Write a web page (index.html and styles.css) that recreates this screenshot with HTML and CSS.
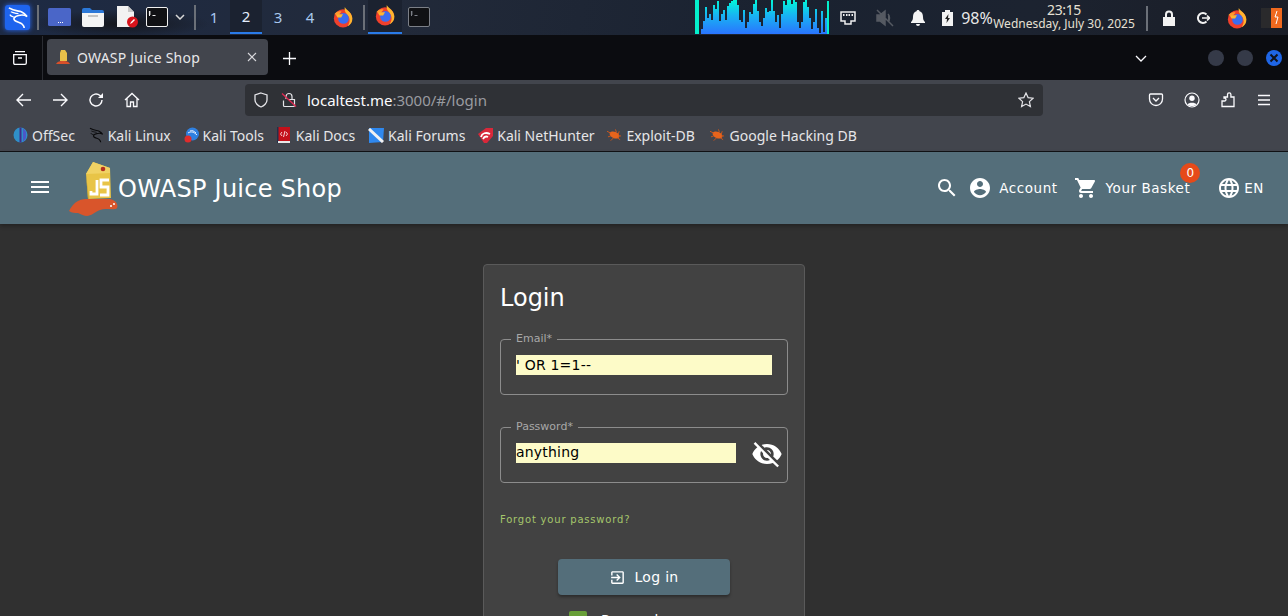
FILE: index.html
```html
<!DOCTYPE html>
<html lang="en">
<head>
  <meta charset="UTF-8">
  <title>OWASP Juice Shop</title>
  <link rel="stylesheet" href="styles.css">
</head>
<body>
  <svg class="defs" width="0" height="0">
    <defs>
      <linearGradient id="specFill" gradientUnits="userSpaceOnUse" x1="0" y1="0" x2="0" y2="34">
        <stop offset="0" stop-color="#00f8d8"/>
        <stop offset="0.45" stop-color="#18b4f2"/>
        <stop offset="1" stop-color="#2a74ff"/>
      </linearGradient>
      <symbol id="firefox" viewBox="0 0 24 24">
        <circle cx="12" cy="13.500" r="10" fill="#f0402c"/>
        <path d="M14 1c1 3 7 5 8 11 1 5-2 9-5 10 3-4 3-9 0-12-1-2-4-4-3-9z" fill="#ffb52e"/>
        <path d="M2.500 9c2-3 5-4 8-3l-3 3.500z" fill="#ff9a2e"/>
        <circle cx="12.500" cy="13.500" r="5.800" fill="#3a6cf0"/>
        <path d="M4 9h8l-2 3.500H6z" fill="#ffb52e"/>
      </symbol>
      <symbol id="terminal" viewBox="0 0 22 20">
        <rect x="0.500" y="0.500" width="21" height="19" rx="1.500" fill="#101114" stroke="currentColor"/>
        <path d="M3.500 4v5M2.800 5h2M2.800 7h2M6.500 8.500h3" stroke="currentColor" fill="none"/>
      </symbol>
      <symbol id="bug" viewBox="0 0 16 12">
        <ellipse cx="8" cy="6" rx="5.500" ry="3.400" transform="rotate(22 8 6)" fill="#e8641c"/>
        <path d="M0 2l4 2M1 8l3-1M4 12l3-3M9 0l1 3M13 2l-1 3M15 7l-3 0M14 11l-3-2" stroke="#d0561a" fill="none"/>
      </symbol>
      <symbol id="dragon" viewBox="0 0 24 24">
        <path d="M3 2c5 3 9 3 13 4 2 1 4 2 6 5-3-2-6-2-9-1-4 1-6 3-4 5 2 2 6 2 8 4 1 1 2 2 2 4" fill="none" stroke="currentColor" stroke-width="1.700"/>
        <path d="M5 6c3 1 5 2 8 2M9 12c-2-1-4-1-5-3" fill="none" stroke="currentColor" stroke-width="1.200"/>
      </symbol>
    </defs>
  </svg>

  <header class="panel">
    <div class="panel-left">
      <span class="kali-btn">
        <svg class="dragon-light" width="23" height="23"><use href="#dragon"/></svg>
      </span>
      <i class="panel-sep"></i>
      <svg width="23" height="18" viewBox="0 0 23 18"><rect width="23" height="18" rx="1.500" fill="#4a66c8"/><path d="M10 14h1v1h-1zM12 14h1v1h-1zM14 14h1v1h-1z" fill="#fff"/></svg>
      <svg width="22" height="19" viewBox="0 0 22 19"><path d="M0 2q0-2 2-2h6l2 2h10q2 0 2 2v2H0z" fill="#2b78d8"/><path d="M0 5h22v12q0 2-2 2H2q-2 0-2-2z" fill="#f4f4f4"/><rect x="6" y="7" width="10" height="2" fill="#c4c4c4"/></svg>
      <svg width="22" height="22" viewBox="0 0 22 22"><path d="M0 0h11l6 6v15H0z" fill="#f2f2f2"/><path d="M11 0l6 6h-6z" fill="#c8c8c8"/><circle cx="15.500" cy="16" r="5.500" fill="#d8141c"/><path d="M13 18l1-2 3-3 1 1-3 3z" fill="#fff"/></svg>
      <svg class="term-live" width="22" height="20"><use href="#terminal"/></svg>
      <svg width="10" height="6" viewBox="0 0 10 6"><path d="M1 1l4 4 4-4" fill="none" stroke="#d8d8d8" stroke-width="1.500"/></svg>
      <i class="panel-sep"></i>
      <span class="ws">1</span>
      <span class="ws ws-on">2</span>
      <span class="ws">3</span>
      <span class="ws">4</span>
      <svg width="22" height="22"><use href="#firefox"/></svg>
      <i class="panel-sep"></i>
      <span class="task task-on"><svg width="22" height="22"><use href="#firefox"/></svg></span>
      <svg class="term-dim" width="22" height="20"><use href="#terminal"/></svg>
    </div>
    <div class="panel-right">
      <svg class="spectrum" width="134" height="36" viewBox="0 0 134 36">
        <rect width="4" height="34" fill="#04f0cc"/>
        <rect x="132" y="1" width="2" height="33" fill="#04f0cc"/>
        <path fill="url(#specFill)" d="M6 34V29H8V21H10V7H12V18H14V14H16V20H18V5H20V9H22V1H24V21H26V14H28V10H30V20H32V6H34V3H36V1H38V0H42V5H44V20H46V22H48V10H50V28H52V22H54V12H56V14H58V4H60V0H62V11H64V22H66V26H68V18H70V8H72V12H74V11H76V0H78V11H80V22H82V15H84V28H86V14H88V1H90V5H92V0H96V4H98V0H100V2H102V22H104V28H106V22H108V2H110V0H112V7H114V18H116V29H118V22H120V9H122V28H124V33H126V11H128V32H130V18H132V34z"/>
      </svg>
      <svg width="16" height="14" viewBox="0 0 16 14"><path d="M1 1h14v9h-4v3H5v-3H1z" fill="none" stroke="#eee" stroke-width="1.500"/><path d="M3 3h1.500v2H3zM6 3h1.500v2H6zM8.500 3H10v2H8.500zM11.500 3H13v2h-1.500z" fill="#eee"/></svg>
      <svg width="20" height="20" viewBox="0 0 20 20"><path d="M3 7h3l5-4v14l-5-4H3zM14 6c2 2 2 6 0 8M3 2l16 16" fill="#555a62" stroke="#555a62" stroke-width="1.500"/></svg>
      <svg width="14" height="16" viewBox="0 0 14 16"><path d="M7 0c1 0 1.500 .6 1.500 1.300C11 2 12 4 12 7c0 3 1 4 2 5v1H0v-1c1-1 2-2 2-5 0-3 1-5 3.500-5.700C5.500 .6 6 0 7 0zM5 14h4a2 2 0 0 1-4 0z" fill="#f4f4f4"/></svg>
      <svg width="11" height="16" viewBox="0 0 11 16"><path d="M3 2V0h5v2h3v14H0V2z" fill="#f2f2f2"/><path d="M6.500 4L3 9h2l-.5 4L8 8H6z" fill="#222"/></svg>
      <span class="pct">98%</span>
      <div class="clock">
        <div class="clock-time">23:15</div>
        <div class="clock-date">Wednesday, July 30, 2025</div>
      </div>
      <i class="panel-sep"></i>
      <svg width="14" height="16" viewBox="0 0 14 16"><path d="M3 7V4.500a4 4 0 0 1 8 0V7h2v9H1V7zm2 0h4V4.500a2 2 0 0 0-4 0z" fill="#f2f2f2"/></svg>
      <svg width="14" height="14" viewBox="0 0 14 14"><path d="M10.500 3.500a5 5 0 1 0 0 7" fill="none" stroke="#f2f2f2" stroke-width="2"/><path d="M6 7h8M11 4.500L13.500 7 11 9.500" fill="none" stroke="#f2f2f2" stroke-width="1.600"/></svg>
      <svg width="22" height="22"><use href="#firefox"/></svg>
      <svg class="burp" width="22" height="20" viewBox="0 0 22 20"><rect width="11" height="20" fill="#2a2a2c"/><rect x="10" width="11" height="20" fill="#f0691e"/><path d="M16 3l-2 6h3l-2 7" fill="none" stroke="#fff"/></svg>
    </div>
  </header>

  <div class="tabbar">
    <svg class="tab-list" width="16" height="14" viewBox="0 0 16 14"><path d="M3 .7h10M1.700 3.700h12.600v8.300q0 1.300-1.300 1.300H3q-1.300 0-1.300-1.300V3.700zM6 7h4" fill="none" stroke="#fbfbfe" stroke-width="1.300"/></svg>
    <i class="tabbar-sep"></i>
    <div class="tab">
      <svg width="14" height="16" viewBox="0 0 14 16"><path d="M5 1h4l2 3v8H4V4z" fill="#e8c04a"/><path d="M0 15c2-3 4-3 7-3s5 0 7 3z" fill="#d8502a"/></svg>
      <span class="tab-title">OWASP Juice Shop</span>
      <svg width="10" height="10" viewBox="0 0 10 10"><path d="M1 1l8 8M9 1l-8 8" stroke="#d8d8dc" stroke-width="1.100"/></svg>
    </div>
    <svg class="new-tab" width="13" height="13" viewBox="0 0 13 13"><path d="M6.500 0v13M0 6.500h13" stroke="#fbfbfe" stroke-width="1.300"/></svg>
    <svg class="tab-more" width="12" height="7" viewBox="0 0 12 7"><path d="M1 1l5 5 5-5" fill="none" stroke="#fbfbfe" stroke-width="1.300"/></svg>
    <div class="wm-btns">
      <i class="wm-btn"></i>
      <i class="wm-btn"></i>
      <i class="wm-btn wm-close"><svg width="10" height="10" viewBox="0 0 10 10"><path d="M1.500 1.500l7 7M8.500 1.500l-7 7" stroke="#10131c" stroke-width="2"/></svg></i>
    </div>
  </div>

  <nav class="navbar">
    <div class="nav-icons">
      <svg width="16" height="14" viewBox="0 0 16 14"><path d="M15 7H1.500M7 1L1 7l6 6" fill="none" stroke="#fbfbfe" stroke-width="1.400"/></svg>
      <svg width="16" height="14" viewBox="0 0 16 14"><path d="M1 7h13.500M9 1l6 6-6 6" fill="none" stroke="#fbfbfe" stroke-width="1.400"/></svg>
      <svg width="16" height="16" viewBox="0 0 16 16"><path d="M14 8a6 6 0 1 1-2-4.500L14 5" fill="none" stroke="#fbfbfe" stroke-width="1.400"/><path d="M15 1v5h-5z" fill="#fbfbfe"/></svg>
      <svg width="16" height="16" viewBox="0 0 16 16"><path d="M1 8l7-6.500L15 8M3 6.500V14.500h3.500V10h3v4.500H13V6.500" fill="none" stroke="#fbfbfe" stroke-width="1.300"/></svg>
    </div>
    <div class="urlbar">
      <svg width="16" height="16" viewBox="0 0 16 16"><path d="M8 1l6 2v5c0 3-3 6-6 7-3-1-6-4-6-7V3z" fill="none" stroke="#e4e4e8" stroke-width="1.300"/></svg>
      <svg class="url-lock" width="16" height="16" viewBox="0 0 16 16"><path d="M2.500 8.500V13.500q0 1 1 1h9q1 0 1-1V7.500H7M5 7V4.500a3 3 0 0 1 6 0V7" fill="none" stroke="#e4e4e8" stroke-width="1.200"/><path d="M1 1.500l14 13" stroke="#e22850" stroke-width="1.300"/></svg>
      <span class="url-text">localtest.me<span class="url-rest">:3000/#/login</span></span>
      <svg class="url-star" width="16" height="16" viewBox="0 0 16 16"><path d="M8 1l2.100 4.600 5 .6-3.700 3.400 1 5L8 12.100 3.600 14.600l1-5L.9 6.200l5-.6z" fill="none" stroke="#e4e4e8" stroke-width="1.200"/></svg>
    </div>
    <div class="nav-tools">
      <svg width="16" height="16" viewBox="0 0 16 16"><path d="M2.500 2h11q1 0 1 1v4a6.500 6.500 0 0 1-13 0V3q0-1 1-1zM5 6l3 3 3-3" fill="none" stroke="#fbfbfe" stroke-width="1.300"/></svg>
      <svg width="16" height="16" viewBox="0 0 16 16"><circle cx="8" cy="8" r="7" fill="none" stroke="#fbfbfe" stroke-width="1.200"/><circle cx="8" cy="6.300" r="2.700" fill="#fbfbfe"/><path d="M3.500 12.500c1-2.500 8-2.500 9 0-2 2-7 2-9 0z" fill="#fbfbfe"/></svg>
      <svg width="16" height="16" viewBox="0 0 16 16"><path d="M2 9h2.500a1.500 1.500 0 0 0 0-3H4V5h3.500V2.500a1.700 1.700 0 0 1 3.400 0V5h3.100v9.500H2z" fill="none" stroke="#fbfbfe" stroke-width="1.300"/></svg>
      <svg width="16" height="12" viewBox="0 0 16 12"><path d="M2 1.500h12M2 6h12M2 10.500h12" stroke="#fbfbfe" stroke-width="1.300"/></svg>
    </div>
  </nav>

  <div class="bookmarks">
    <a class="bm"><svg width="15" height="16" viewBox="0 0 15 16"><ellipse cx="7.500" cy="8" rx="7" ry="7.500" fill="#2f8fc8"/><path d="M6.500 .5h2v15h-2z" fill="#3f2f8a"/><path d="M10 1l3 4v6l-3 4z" fill="#4a58c8"/></svg>OffSec</a>
    <a class="bm"><svg class="dragon-dark" width="16" height="16"><use href="#dragon"/></svg>Kali Linux</a>
    <a class="bm"><svg width="15" height="16" viewBox="0 0 15 16"><circle cx="8.500" cy="7" r="6.500" fill="#2f80e0"/><path d="M4 6c3-2 6-1 9 2M6 4c2-1 4 0 6 2" fill="none" stroke="#e8f0ff"/><circle cx="4" cy="12" r="3.500" fill="#e02c2c"/></svg>Kali Tools</a>
    <a class="bm bm-book"><svg width="13" height="16" viewBox="0 0 13 16"><rect x="1" width="12" height="15" fill="#c4101a"/><rect width="1.500" height="16" fill="#23304a"/><rect x="1" y="14" width="12" height="2" fill="#e8e8e8"/><path d="M5 5L3.500 7 5 9M9 5l1.500 2L9 9M8 4L6.500 10" fill="none" stroke="#fff" stroke-width=".800"/></svg>Kali Docs</a>
    <a class="bm"><svg width="16" height="15" viewBox="0 0 16 15"><path d="M1 0h15l-1 14-14 1z" fill="#2f88ee"/><path d="M1 1l14 13" stroke="#f2f2f2" stroke-width="3"/></svg>Kali Forums</a>
    <a class="bm"><svg width="15" height="15" viewBox="0 0 15 15"><path d="M0 6l8-6h7v8l-6 7H6z" fill="#d8283a"/><path d="M3 9c1-4 5-5 9-3M5 11c1-2 3-3 5-2" fill="none" stroke="#fff" stroke-width="1.800"/></svg>Kali NetHunter</a>
    <a class="bm"><svg width="15" height="12"><use href="#bug"/></svg>Exploit-DB</a>
    <a class="bm bm-last"><svg width="15" height="12"><use href="#bug"/></svg>Google Hacking DB</a>
  </div>

  <div class="app-toolbar">
    <svg class="mat-icon menu-icon" viewBox="0 0 24 24"><path d="M3 18h18v-2H3v2zm0-5h18v-2H3v2zm0-7v2h18V6H3z"/></svg>
    <svg class="logo" width="49" height="54" viewBox="0 0 49 54">
      <path d="M0 49c2-4 5-8 9-10 4-2 7-2 10-2h22c3 1 6 2 7 5 1 3 0 5-2 5-5 1-10-1-15 1-5 2-9 6-13 6-3 0-6-2-9-3-3 0-6 0-9-2z" fill="#d9552b"/>
      <path d="M24 0l17 6 1 30-23 1-2-25z" fill="#e8c447"/>
      <path d="M24 0l17 6 0 5-24 1z" fill="#f0d264"/>
      <path d="M17 12l3 25-1 0-2-25z" fill="#c9a635"/>
      <circle cx="34" cy="7" r="2.300" fill="#b3301f"/>
      <path d="M28 18v14h-6v-3M40 18h-8v7h7v8h-8" fill="none" stroke="#fff" stroke-width="2.800"/>
      <circle cx="42" cy="44" r="1" fill="#fff"/>
      <circle cx="45" cy="42" r="1" fill="#fff"/>
    </svg>
    <span class="app-title">OWASP Juice Shop</span>
    <div class="toolbar-right">
      <svg class="mat-icon" viewBox="0 0 24 24"><path d="M15.500 14h-.79l-.28-.27C15.410 12.590 16 11.110 16 9.500 16 5.910 13.090 3 9.500 3S3 5.910 3 9.500 5.910 16 9.500 16c1.610 0 3.090-.59 4.230-1.570l.27.28v.79l5 4.990L20.490 19l-4.990-5zm-6 0C7.010 14 5 11.990 5 9.500S7.010 5 9.500 5 14 7.010 14 9.500 11.990 14 9.500 14z"/></svg>
      <button class="tb-btn account-btn">
        <svg class="mat-icon" viewBox="0 0 24 24"><path d="M12 2C6.480 2 2 6.480 2 12s4.480 10 10 10 10-4.480 10-10S17.520 2 12 2zm0 3c1.660 0 3 1.340 3 3s-1.340 3-3 3-3-1.340-3-3 1.340-3 3-3zm0 14.200c-2.500 0-4.710-1.280-6-3.220.03-1.990 4-3.080 6-3.080 1.990 0 5.970 1.090 6 3.080-1.290 1.940-3.500 3.220-6 3.220z"/></svg>
        <span>Account</span>
      </button>
      <button class="tb-btn basket-btn">
        <svg class="mat-icon" viewBox="0 0 24 24"><path d="M7 18c-1.100 0-1.990.9-1.990 2S5.900 22 7 22s2-.9 2-2-.9-2-2-2zM1 2v2h2l3.600 7.590-1.350 2.450c-.16.280-.25.610-.25.960 0 1.100.9 2 2 2h12v-2H7.420c-.14 0-.25-.11-.25-.25l.03-.12.9-1.630h7.450c.75 0 1.410-.41 1.750-1.030l3.580-6.490c.08-.14.120-.31.120-.48 0-.55-.45-1-1-1H5.210l-.94-2H1zm16 16c-1.100 0-1.990.9-1.990 2s.89 2 1.990 2 2-.9 2-2-.9-2-2-2z"/></svg>
        <span>Your Basket</span>
        <b class="badge">0</b>
      </button>
      <button class="tb-btn lang-btn">
        <svg class="mat-icon" viewBox="0 0 24 24"><path d="M11.990 2C6.470 2 2 6.480 2 12s4.470 10 9.990 10C17.520 22 22 17.520 22 12S17.520 2 11.990 2zm6.930 6h-2.950c-.32-1.250-.78-2.450-1.380-3.560 1.840.63 3.370 1.910 4.330 3.560zM12 4.040c.83 1.200 1.480 2.530 1.910 3.960h-3.820c.43-1.430 1.080-2.760 1.910-3.960zM4.260 14C4.100 13.360 4 12.690 4 12s.1-1.360.26-2h3.380c-.08.66-.14 1.320-.14 2 0 .68.06 1.340.14 2H4.260zm.82 2h2.950c.32 1.250.78 2.450 1.380 3.560-1.840-.63-3.370-1.900-4.330-3.560zm2.950-8H5.080c.96-1.660 2.490-2.930 4.330-3.560C8.810 5.550 8.350 6.750 8.030 8zM12 19.960c-.83-1.200-1.480-2.530-1.910-3.960h3.820c-.43 1.430-1.080 2.760-1.910 3.960zM14.340 14H9.660c-.09-.66-.16-1.320-.16-2 0-.68.07-1.350.16-2h4.680c.09.650.16 1.320.16 2 0 .68-.07 1.340-.16 2zm.25 5.560c.6-1.110 1.060-2.310 1.380-3.560h2.950c-.96 1.650-2.490 2.930-4.330 3.560zM16.360 14c.08-.66.14-1.320.14-2 0-.68-.06-1.340-.14-2h3.380c.16.640.26 1.310.26 2s-.1 1.360-.26 2h-3.380z"/></svg>
        <span>EN</span>
      </button>
    </div>
  </div>

  <main class="content">
    <form class="login-card">
      <h1 class="login-title">Login</h1>
      <fieldset class="field">
        <legend>Email*</legend>
        <input class="field-input field-input-wide" type="text" value="' OR 1=1--">
      </fieldset>
      <fieldset class="field field-gap">
        <legend>Password*</legend>
        <input class="field-input field-input-short" type="text" value="anything">
        <svg class="eye" viewBox="0 0 24 24"><path d="M12 7c2.760 0 5 2.240 5 5 0 .65-.13 1.260-.36 1.830l2.920 2.920c1.510-1.260 2.700-2.890 3.430-4.750-1.730-4.390-6-7.500-11-7.500-1.400 0-2.740.25-3.980.7l2.160 2.160C10.740 7.130 11.350 7 12 7zM2 4.270l2.280 2.280.46.46C3.080 8.300 1.780 10.020 1 12c1.730 4.390 6 7.500 11 7.500 1.550 0 3.030-.3 4.380-.84l.42.42L19.730 22 21 20.730 3.270 3 2 4.270zM7.530 9.800l1.550 1.550c-.05.21-.08.43-.08.65 0 1.660 1.340 3 3 3 .22 0 .44-.03.65-.08l1.550 1.550c-.67.33-1.410.53-2.200.53-2.760 0-5-2.240-5-5 0-.79.2-1.530.53-2.200zm4.310-.78l3.150 3.150.02-.16c0-1.660-1.340-3-3-3l-.17.01z"/></svg>
      </fieldset>
      <a class="forgot">Forgot your password?</a>
      <button class="login-btn" type="button">
        <svg width="17" height="17" viewBox="0 0 24 24"><path fill="#fff" d="M10.090 15.590L11.500 17l5-5-5-5-1.410 1.410L12.670 11H3v2h9.670l-2.580 2.590zM19 3H5c-1.110 0-2 .9-2 2v4h2V5h14v14H5v-4H3v4c0 1.100.89 2 2 2h14c1.100 0 2-.9 2-2V5c0-1.100-.9-2-2-2z"/></svg>
        Log in
      </button>
      <label class="remember"><i class="check"></i>Remember me</label>
    </form>
  </main>
</body>
</html>
```

FILE: styles.css
```css
* {
  box-sizing: border-box;
}

html, body {
  margin: 0;
  height: 616px;
  overflow: hidden;
}

body {
  display: flex;
  flex-direction: column;
  background: #303030;
  font-family: "DejaVu Sans", sans-serif;
  color: #fff;
}

.defs {
  position: absolute;
}

/* desktop panel */
.panel {
  flex: none;
  height: 36px;
  display: flex;
  justify-content: space-between;
  padding-bottom: 3px;
  font-family: "Noto Sans", sans-serif;
  border-bottom: 1px solid #0b0c10;
  background:
    radial-gradient(ellipse 90px 14px at 120px 24px, #14161c 0, rgba(20, 22, 28, 0) 100%),
    linear-gradient(100deg, #1d2a44 0, #222a3a 30%, #1a2230 60%, #1c2330 80%, #1a1d26 100%);
}

.panel-left {
  display: grid;
  grid-template-columns: 34px 8px 34px 34px 36px 22px 24px 6px 32px 32px 32px 32px 34px 8px 34px 34px;
  place-items: center;
}

.panel-right {
  display: grid;
  grid-template-columns: 134px 38px 34px 34px 25px 34px 140px 26px 18px 50px 18px 42px;
  place-items: center;
}

.spectrum {
  align-self: start;
}

.panel-sep {
  display: block;
  width: 2px;
  height: 25px;
  background: #6b7078;
}

.kali-btn {
  width: 25px;
  height: 25px;
  display: flex;
  align-items: center;
  justify-content: center;
  background: #1e64ee;
  border-radius: 3px;
  box-shadow: 0 0 5px #2a6cff;
}

.dragon-light {
  color: #fff;
}

.dragon-dark {
  color: #0a0a0c;
}

.term-live {
  color: #f0f0f0;
}

.term-dim {
  color: #7c8088;
}

.ws {
  width: 32px;
  height: 32px;
  display: flex;
  align-items: center;
  justify-content: center;
  font-size: 15px;
  color: #a8c8ee;
}

.ws-on {
  color: #e4eefc;
  height: 34px;
  background: #1b2230;
  border-bottom: 2px solid #2a7be8;
  align-self: start;
}

.task {
  width: 34px;
  height: 34px;
  padding-bottom: 2px;
  display: flex;
  align-items: center;
  justify-content: center;
  align-self: start;
}

.task-on {
  background: #1b2230;
  border-bottom: 2px solid #2a7be8;
}

.pct {
  font-size: 16px;
  color: #e8e8e8;
}

.clock {
  text-align: center;
  color: #e6e0d4;
  padding-bottom: 4px;
}

.clock-time {
  font-size: 14px;
  line-height: 15px;
  letter-spacing: -0.4px;
}

.clock-date {
  font-size: 12px;
  line-height: 14px;
  white-space: nowrap;
}

.burp {
  justify-self: end;
  margin-right: 5px;
}

/* firefox tab strip */
.tabbar {
  flex: none;
  height: 44px;
  display: flex;
  align-items: center;
  background: #0b0c10;
  font-family: "Noto Sans", sans-serif;
}

.tab-list {
  margin-left: 12px;
}

.tabbar-sep {
  width: 1px;
  height: 44px;
  background: #2a2c32;
  margin-left: 14px;
}

.tab {
  width: 221px;
  height: 36px;
  margin-left: 4px;
  margin-top: -2px;
  padding: 0 11px 0 9px;
  display: flex;
  align-items: center;
  background: #42454d;
  border-radius: 4px;
  font-size: 14px;
  letter-spacing: 0.2px;
  color: #e8e8ea;
}

.tab-title {
  flex: 1;
  margin-left: 7px;
}

.new-tab {
  margin-left: 15px;
}

.tab-more {
  margin-left: auto;
}

.wm-btns {
  display: flex;
  gap: 13px;
  margin-left: 61px;
  margin-right: 6px;
}

.wm-btn {
  width: 16px;
  height: 16px;
  border-radius: 50%;
  background: #353a48;
  display: flex;
  align-items: center;
  justify-content: center;
}

.wm-close {
  background: #1f66e6;
}

/* firefox nav bar */
.navbar {
  flex: none;
  height: 40px;
  display: flex;
  align-items: center;
  background: #42454d;
  font-family: "Noto Sans", sans-serif;
}

.nav-icons {
  width: 245px;
  padding-left: 16px;
  display: flex;
  align-items: center;
  gap: 20px;
}

.urlbar {
  width: 798px;
  height: 32px;
  padding: 0 9px 0 8px;
  display: flex;
  align-items: center;
  background: #2f3136;
  border-radius: 4px;
  font-size: 15px;
  color: #fbfbfe;
}

.url-lock {
  margin-left: 12px;
}

.url-text {
  margin-left: 10px;
  flex: 1;
}

.url-rest {
  color: #9a9ba0;
}

.nav-tools {
  display: flex;
  align-items: center;
  gap: 20px;
  margin-left: 105px;
}

/* bookmarks bar */
.bookmarks {
  flex: none;
  height: 32px;
  padding: 0 0 1px 13px;
  display: flex;
  align-items: center;
  gap: 12.8px;
  background: #42454d;
  border-bottom: 1px solid #111215;
  font-family: "Noto Sans", sans-serif;
  font-size: 14px;
  color: #e6e6e8;
}

.bm {
  display: flex;
  align-items: center;
  gap: 4px;
}

.bm-book {
  gap: 6px;
}

.bm-last {
  margin-left: 2px;
  gap: 5px;
}

/* juice shop toolbar */
.app-toolbar {
  flex: none;
  height: 72px;
  padding: 0 24px 0 28px;
  display: flex;
  align-items: center;
  background: #546e7a;
  box-shadow: 0 2px 4px rgba(0, 0, 0, 0.3);
  position: relative;
}

.mat-icon {
  width: 24px;
  height: 24px;
  fill: #fff;
  flex: none;
}

.menu-icon {
  margin-top: -2px;
}

.logo {
  margin-left: 17px;
  margin-top: 2px;
}

.app-title {
  font-size: 24px;
  letter-spacing: 0.25px;
  margin-top: 1px;
}

.toolbar-right {
  margin-left: auto;
  display: flex;
  align-items: center;
}

.tb-btn {
  position: relative;
  display: flex;
  align-items: center;
  padding: 0;
  border: 0;
  background: none;
  color: #fff;
  font: 13.5px "DejaVu Sans", sans-serif;
  letter-spacing: 0.55px;
}

.account-btn {
  margin-left: 9px;
  gap: 7px;
}

.basket-btn {
  margin-left: 16px;
  gap: 8px;
}

.lang-btn {
  margin-left: 27px;
  gap: 3px;
}

.badge {
  position: absolute;
  right: -10px;
  top: -13px;
  width: 20px;
  height: 20px;
  border-radius: 50%;
  background: #e64a19;
  font-size: 12px;
  font-weight: 400;
  line-height: 20px;
  text-align: center;
  letter-spacing: 0;
}

/* login card */
.content {
  flex: 1;
  padding-top: 40px;
  display: flex;
  justify-content: center;
}

.login-card {
  width: 322px;
  height: 480px;
  flex: none;
  padding: 16px;
  display: flex;
  flex-direction: column;
  background: #424242;
  border: 1px solid #5a5a5a;
  border-radius: 4px;
}

.login-title {
  margin: 1px 0 0;
  font-size: 24px;
  font-weight: 400;
  line-height: 32px;
}

.field {
  margin: 19px 0 0;
  padding: 10px 15px 0;
  height: 62px;
  display: flex;
  align-items: flex-start;
  border: 1px solid #8c8c8c;
  border-radius: 4px;
  min-width: 0;
}

.field legend {
  margin-left: -5px;
  padding: 0 5px;
  font-size: 11px;
  line-height: 12px;
  color: #a8a8a8;
}

.field-gap {
  margin-top: 26px;
  position: relative;
}

.field-input {
  display: block;
  height: 20px;
  padding: 0;
  border: 0;
  outline: 0;
  background: #fdfbc8;
  color: #000;
  font: 14px "DejaVu Sans", sans-serif;
  letter-spacing: 0.2px;
}

.field-input-wide {
  width: 256px;
}

.field-input-short {
  width: 220px;
  padding-bottom: 2px;
}

.eye {
  position: absolute;
  left: 250px;
  top: 5px;
  width: 32px;
  height: 32px;
  fill: #fff;
}

.forgot {
  margin-top: 31px;
  font-size: 10px;
  line-height: 12px;
  letter-spacing: 0.8px;
  color: #a5c66c;
}

.login-btn {
  align-self: center;
  width: 172px;
  height: 36px;
  margin-top: 33px;
  display: flex;
  align-items: center;
  justify-content: center;
  gap: 8px;
  border: 0;
  border-radius: 4px;
  background: #546e7a;
  box-shadow: 0 2px 3px rgba(0, 0, 0, 0.35);
  color: #fff;
  font: 14px "DejaVu Sans", sans-serif;
  letter-spacing: 0.3px;
}

.remember {
  margin: 16px 0 0 69px;
  display: flex;
  align-items: center;
  gap: 14px;
  font-size: 14px;
}

.check {
  position: relative;
  width: 18px;
  height: 18px;
  background: #689f38;
  border-radius: 2px;
}

.check::after {
  content: "";
  position: absolute;
  left: 6px;
  top: 2px;
  width: 6px;
  height: 10px;
  border: solid #fff;
  border-width: 0 2px 2px 0;
  transform: rotate(45deg);
}
```
